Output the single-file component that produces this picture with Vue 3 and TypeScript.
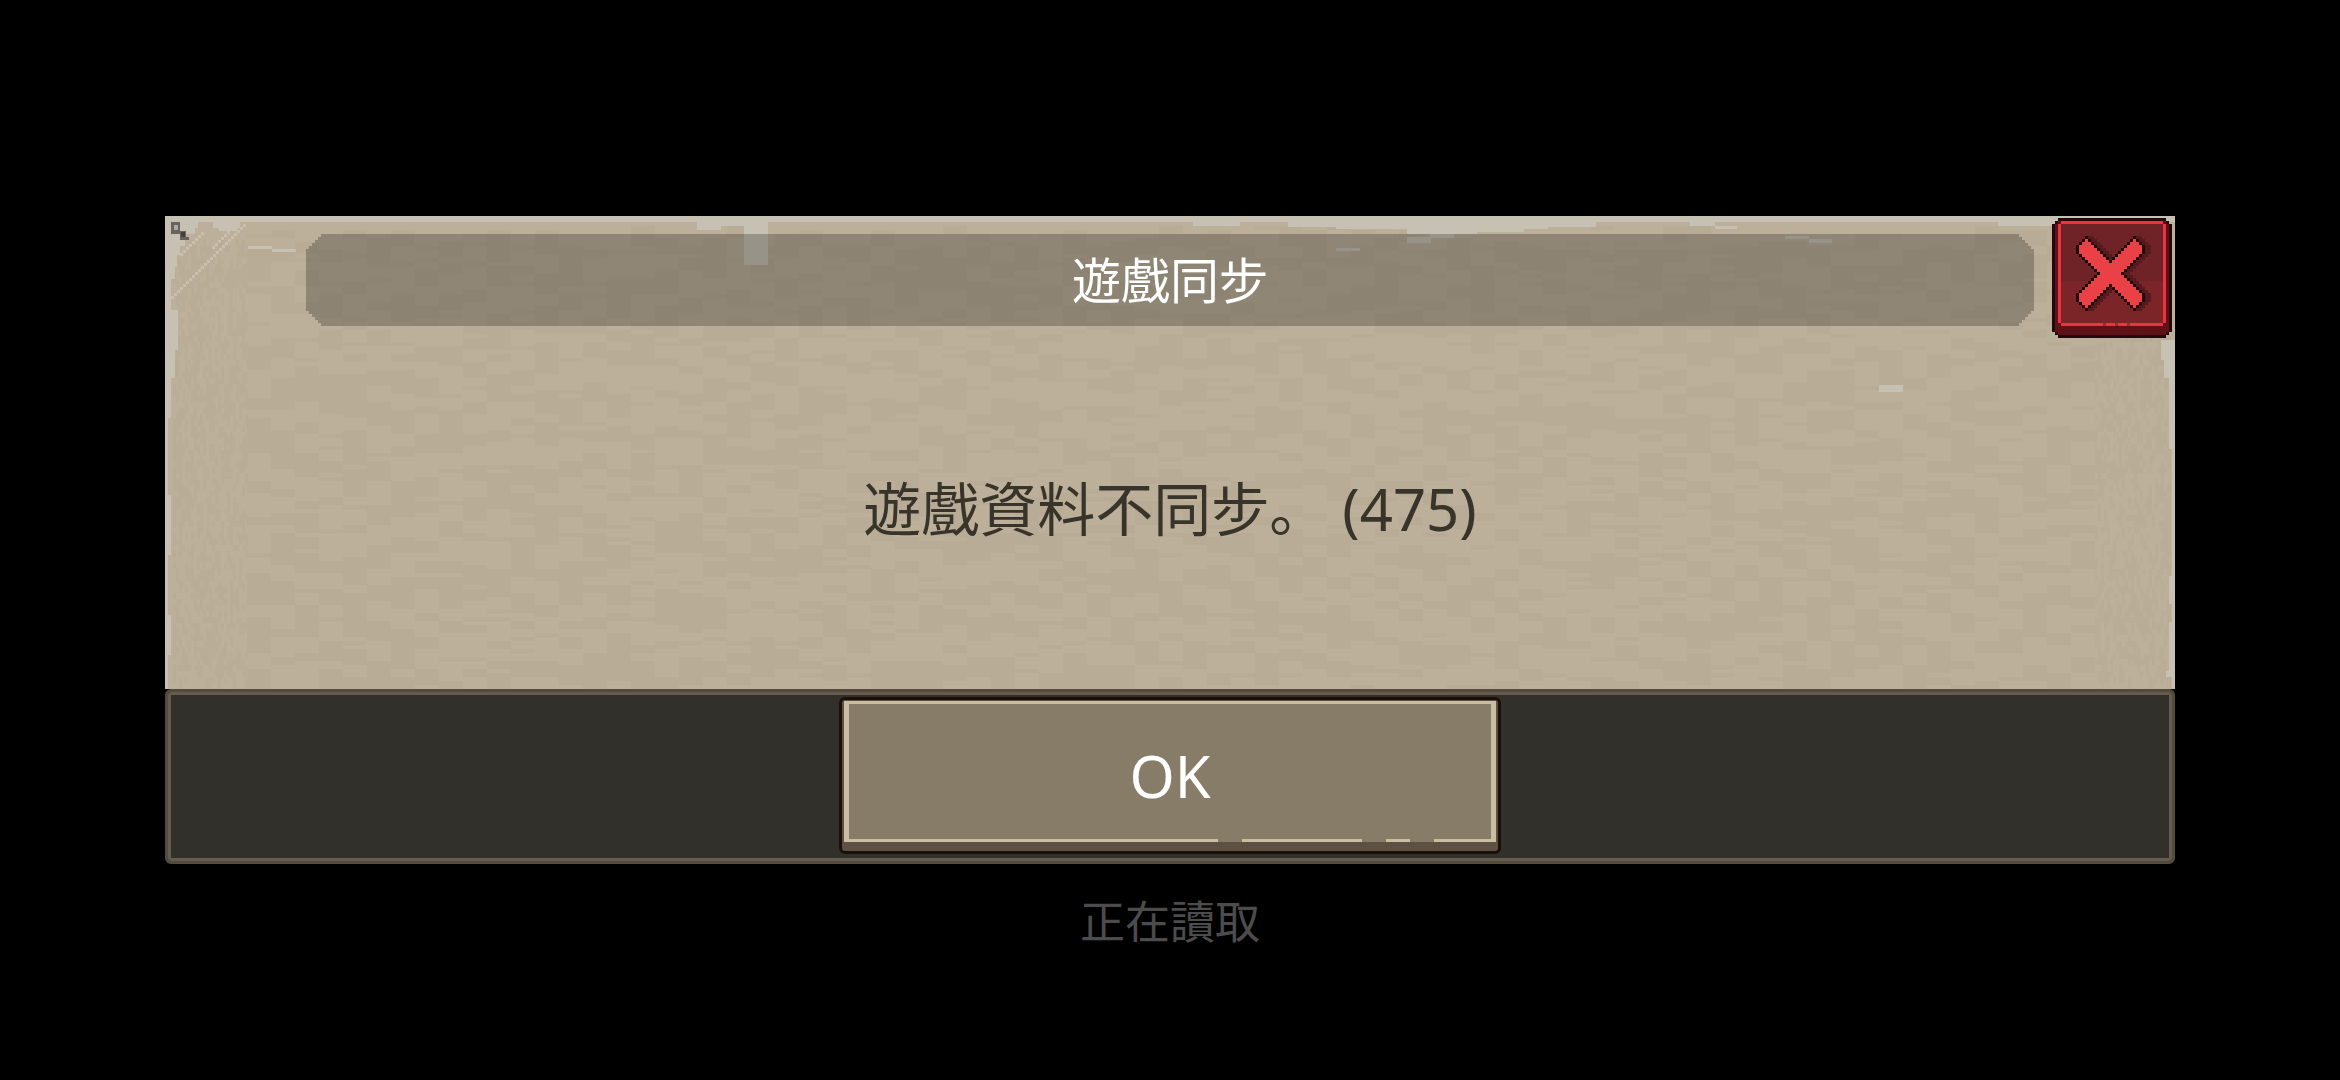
<script setup lang="ts">
import { ref } from 'vue'

const open = ref(true)
const close = (): void => {
  open.value = false
}

// Small deterministic generator, so the paper grain is the same on every load
const makeRandom = (seed: number) => (): number => {
  seed = (seed * 1664525 + 1013904223) >>> 0
  return seed / 4294967296
}

const rect = (x: number, y: number, w: number, h: number): string => `M${x} ${y}h${w}v${h}h${-w}z`

// Broad horizontal grain in the middle of the sheet
const buildGrain = (): string => {
  const random = makeRandom(475)
  let path = ''
  for (let x = 82; x < 1930; x += 24) {
    let y = 6
    while (y < 460) {
      y += 4 + Math.floor(random() * 7) * 4
      const height = 4 + Math.floor(random() * random() * 12) * 4
      path += rect(x, y, Math.min(24, 1930 - x), height)
      y += height
    }
  }
  return path
}

// Finer grain along the left and right edges
const buildEdgeGrain = (): string => {
  const random = makeRandom(91)
  let path = ''
  for (const start of [8, 1930]) {
    for (let x = start; x < start + 74; x += 3) {
      for (let y = 24; y < 468; y += 6) {
        if (random() < 0.42) path += rect(x, y, 3, random() < 0.5 ? 6 : 12)
      }
    }
  }
  return path
}

const buildScratch = (x: number, y: number, length: number): string => {
  let path = ''
  for (let i = 0; i < length; i += 3) path += rect(x + i, y - i, 3, 3)
  return path
}

const grain = buildGrain()
const edgeGrain = buildEdgeGrain()

const worn: string = [
  [0, 0, 2010, 6],
  [532, 6, 24, 8], [556, 6, 23, 4], [579, 6, 24, 43],
  [1028, 6, 47, 4], [1123, 6, 48, 5], [1171, 6, 71, 7],
  [1242, 6, 70, 12], [1312, 6, 47, 10], [1359, 6, 24, 7], [1383, 6, 48, 5],
  [1525, 6, 25, 4], [1550, 10, 22, 3], [1833, 6, 60, 4], [1893, 6, 20, 6],
  [1242, 21, 24, 6], [1265, 18, 24, 4], [1171, 32, 24, 3],
  [1620, 20, 24, 3], [1644, 23, 23, 4], [1714, 169, 24, 7],
  [83, 30, 24, 3], [107, 33, 24, 3],
  [0, 6, 6, 96], [6, 6, 27, 6], [6, 12, 24, 6], [6, 18, 14, 12], [6, 30, 9, 9], [6, 39, 6, 12], [6, 51, 4, 12],
  [48, 6, 27, 6], [54, 12, 18, 3],
  [0, 94, 13, 40], [0, 134, 10, 28], [0, 162, 6, 40], [0, 202, 3, 272],
  [3, 280, 3, 60], [3, 400, 3, 40],
  [1996, 124, 14, 20], [1999, 144, 11, 18], [2004, 162, 6, 71], [2007, 233, 3, 241],
  [2004, 361, 3, 28], [2004, 407, 3, 54], [2001, 456, 6, 6],
].map(([x, y, w, h]) => rect(x, y, w, h)).join('')

const scratches = buildScratch(6, 80, 74) + buildScratch(15, 37, 24) + buildScratch(47, 30, 33)

// The cross is laid out on a square grid, centred on cell (19, 18)
const isCross = (c: number, r: number): boolean =>
  Math.abs(c) <= 10 &&
  ((Math.abs(c - r) <= 3 && Math.abs(c + r) <= 19) || (Math.abs(c + r) <= 3 && Math.abs(c - r) <= 19))

const buildCross = () => {
  let fill = ''
  let outline = ''
  let shade = ''
  for (let r = -13; r <= 14; r++) {
    for (let c = -13; c <= 14; c++) {
      const cell = rect(c + 19, r + 18, 1, 1)
      const near = (x: number, y: number) =>
        isCross(x, y) || isCross(x - 1, y) || isCross(x + 1, y) || isCross(x, y - 1) || isCross(x, y + 1)
      if (isCross(c, r)) fill += cell
      else if (near(c, r)) outline += cell
      else if (near(c - 2, r) || near(c - 1, r)) shade += cell
    }
  }
  return { fill, outline, shade }
}
const cross = buildCross()
</script>

<template>
  <main class="screen">
    <section v-if="open" class="dialog" role="dialog" aria-labelledby="dialog-title">
      <div class="paper">
        <svg class="texture" viewBox="0 0 2010 474" preserveAspectRatio="none" shape-rendering="crispEdges" aria-hidden="true">
          <rect width="2010" height="474" fill="#bdb09a" />
          <path :d="grain" fill="#b8ac96" />
          <path :d="edgeGrain" fill="#baad97" />
          <path :d="worn" fill="#c7c1b4" />
          <path :d="scratches" fill="#c8bfae" />
          <path d="M6 6h9v9h6v6h3v3h-9v-6h-9z" fill="#66645c" />
          <path d="M9 9h4v5h-4z" fill="#a7aaa8" />
          <path d="M16 16h4v5h-4z" fill="#45403a" />
        </svg>
        <header class="header">
          <h1 id="dialog-title" class="title">遊戲同步</h1>
          <button class="close" type="button" aria-label="關閉" @click="close">
            <svg viewBox="0 0 40 40" shape-rendering="crispEdges" aria-hidden="true">
              <path d="M2 0h36v1h1v1h1v36h-1v1h-1v1h-36v-1h-1v-1h-1v-36h1v-1h1z" fill="#21090c" />
              <path d="M2 1h36v1h1v36h-1v1h-36v-1h-1v-36h1z" fill="#5f1118" />
              <path d="M3 1h34v1h1v33h-1v1h-34v-1h-1v-33h1z" fill="#ec3341" />
              <path d="M3 2h34v19h-34z" fill="#702326" />
              <path d="M3 21h34v14h-34z" fill="#7c2529" />
              <path d="M17 35h1v1h-1zM21 35h1v1h-1zM25 35h1v1h-1z" fill="#9c2a32" />
              <path :d="cross.shade" fill="#551a1d" />
              <path :d="cross.outline" fill="#1e090b" />
              <path :d="cross.fill" fill="#e94145" />
            </svg>
          </button>
        </header>
        <p class="message">遊戲資料不同步。 (475)</p>
      </div>
      <footer class="footer">
        <button class="ok" type="button" @click="close">
          <span class="ok-face">OK</span>
        </button>
      </footer>
    </section>
    <p class="status">正在讀取</p>
  </main>
</template>

<style>
body {
  margin: 0;
  background: #000;
}
</style>

<style scoped>
.screen {
  box-sizing: border-box;
  min-height: 100vh;
  padding: 20vh 165px 0;
  background: #000;
  font-family: "Noto Sans", "Noto Sans CJK JP", sans-serif;
}

.paper {
  position: relative;
  background: #bdb09a;
}

.texture {
  position: absolute;
  inset: 0;
  width: 100%;
  height: 100%;
}

.header {
  position: relative;
  display: flex;
  align-items: flex-start;
  gap: 18px;
  padding: 2px 3px 0 141px;
}

.title {
  flex: 1;
  margin: 16px 0 0;
  background: rgba(0, 0, 0, 0.24);
  clip-path: polygon(
    0 15px, 3px 15px, 3px 12px, 6px 12px, 6px 9px, 9px 9px, 9px 6px, 12px 6px, 12px 3px, 15px 3px, 15px 0,
    calc(100% - 15px) 0, calc(100% - 15px) 3px, calc(100% - 12px) 3px, calc(100% - 12px) 6px,
    calc(100% - 9px) 6px, calc(100% - 9px) 9px, calc(100% - 6px) 9px, calc(100% - 6px) 12px,
    calc(100% - 3px) 12px, calc(100% - 3px) 15px, 100% 15px,
    100% calc(100% - 15px), calc(100% - 3px) calc(100% - 15px), calc(100% - 3px) calc(100% - 12px),
    calc(100% - 6px) calc(100% - 12px), calc(100% - 6px) calc(100% - 9px), calc(100% - 9px) calc(100% - 9px),
    calc(100% - 9px) calc(100% - 6px), calc(100% - 12px) calc(100% - 6px), calc(100% - 12px) calc(100% - 3px),
    calc(100% - 15px) calc(100% - 3px), calc(100% - 15px) 100%,
    15px 100%, 15px calc(100% - 3px), 12px calc(100% - 3px), 12px calc(100% - 6px),
    9px calc(100% - 6px), 9px calc(100% - 9px), 6px calc(100% - 9px), 6px calc(100% - 12px),
    3px calc(100% - 12px), 3px calc(100% - 15px), 0 calc(100% - 15px)
  );
  color: #fff;
  font-size: 49px;
  font-weight: 400;
  line-height: 92px;
  text-align: center;
}

.close {
  width: 120px;
  height: 120px;
  padding: 0;
  border: 0;
  background: none;
  cursor: pointer;
}

.close svg {
  display: block;
  width: 100%;
  height: 100%;
}

.message {
  position: relative;
  margin: 0;
  padding: 123px 0 132px;
  color: #38342a;
  font-size: 58px;
  line-height: 96px;
  text-align: center;
}

.footer {
  display: flex;
  justify-content: center;
  padding: 5px 0 7px;
  border: 3px solid #544b3f;
  border-radius: 6px;
  background: #32302a;
  box-shadow: inset 0 0 0 3px #655c4d;
}

.ok {
  width: 33%;
  padding: 1px 2px 9px;
  border: 3px solid #1b0f0c;
  border-radius: 6px;
  background: #5c5143;
  color: #fff;
  font-family: inherit;
  font-size: 58px;
  line-height: 127px;
  cursor: pointer;
}

.ok-face {
  position: relative;
  display: block;
  padding-top: 8px;
  border: solid #cbbda1;
  border-width: 3px 5px;
  background: #877c67;
}

/* Breaks worn into the lower rim of the button */
.ok-face::after {
  content: "";
  position: absolute;
  right: 0;
  bottom: -3px;
  width: 273px;
  height: 3px;
  background: linear-gradient(
    to right,
    #877c67 24px, transparent 24px 144px,
    #877c67 144px 168px, transparent 168px 192px,
    #877c67 192px 216px, transparent 216px
  );
}

.status {
  margin: 26px 0 0;
  color: #4c4c4c;
  font-size: 45px;
  line-height: 64px;
  text-align: center;
}
</style>
